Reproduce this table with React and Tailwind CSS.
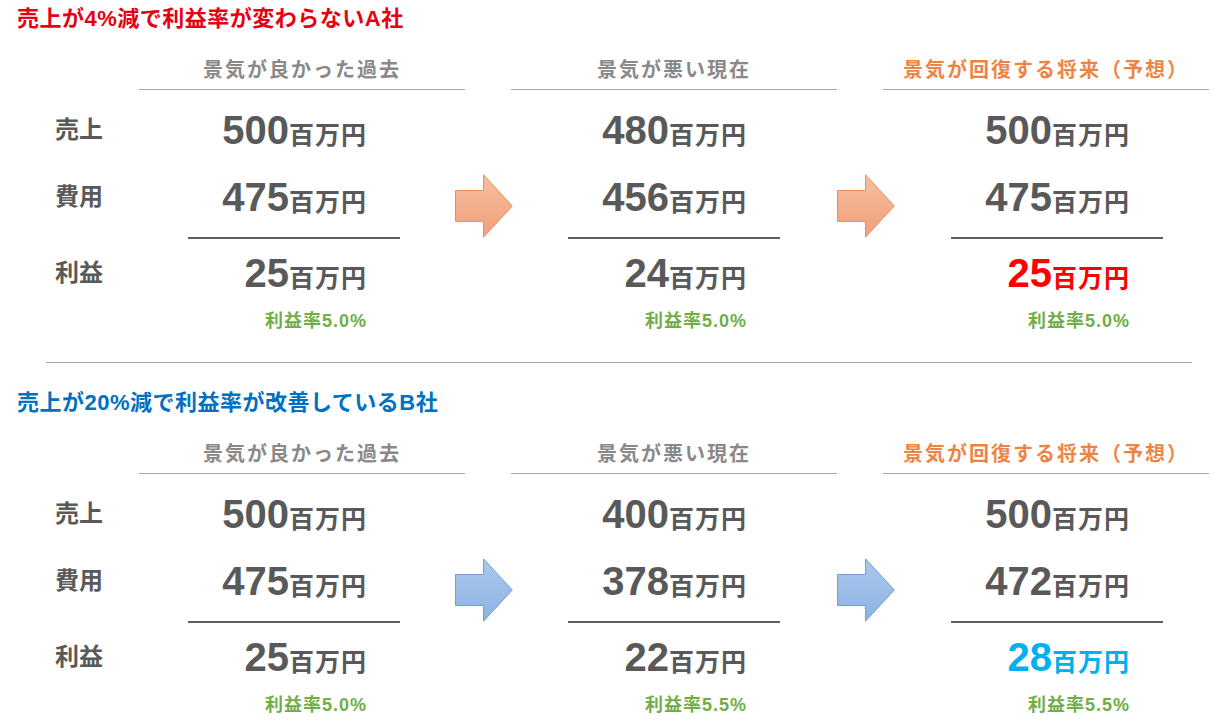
import React from 'react';

const headers = [
  { text: '景気が良かった過去', color: 'text-[#898989]' },
  { text: '景気が悪い現在', color: 'text-[#898989]' },
  { text: '景気が回復する将来（予想）', color: 'text-[#ee8444]' },
];

const companies = [
  {
    title: '売上が4%減で利益率が変わらないA社',
    titleColor: 'text-[#e60012]',
    arrow: 'orange',
    periods: [
      { sales: '500', cost: '475', profit: '25', margin: '5.0%' },
      { sales: '480', cost: '456', profit: '24', margin: '5.0%' },
      { sales: '500', cost: '475', profit: '25', margin: '5.0%', profitColor: 'text-[#ff0000]' },
    ],
  },
  {
    title: '売上が20%減で利益率が改善しているB社',
    titleColor: 'text-[#0070c0]',
    arrow: 'blue',
    periods: [
      { sales: '500', cost: '475', profit: '25', margin: '5.0%' },
      { sales: '400', cost: '378', profit: '22', margin: '5.5%' },
      { sales: '500', cost: '472', profit: '28', margin: '5.5%', profitColor: 'text-[#00b0f0]' },
    ],
  },
];

const Arrow = ({ tone }) => {
  const id = `grad-${tone}`;
  const stops = tone === 'orange' ? ['#f6bea0', '#f1a07a'] : ['#a9c8ec', '#8db2e2'];
  const stroke = tone === 'orange' ? '#ee8d5c' : '#739fd6';
  return (
    <svg width="58" height="64" viewBox="0 0 58 64">
      <defs>
        <linearGradient id={id} x1="0" y1="0" x2="0" y2="1">
          <stop offset="0" stopColor={stops[0]} />
          <stop offset="1" stopColor={stops[1]} />
        </linearGradient>
      </defs>
      <path
        d="M0.5 16.5 H28.5 V0.8 L57.3 32 L28.5 63.2 V47.5 H0.5 Z"
        fill={`url(#${id})`}
        stroke={stroke}
        strokeWidth="1"
      />
    </svg>
  );
};

const Amount = ({ value, color = 'text-[#595959]' }) => (
  <div className={`flex items-baseline justify-end pr-[33px] font-bold ${color}`}>
    <span className="text-[40px] leading-none">{value}</span>
    <span className="text-[25px] leading-none tracking-[1px]">百万円</span>
  </div>
);

const PeriodColumn = ({ period }) => (
  <div className="w-[212px] flex flex-col">
    <div className="h-[67px] flex flex-col justify-center">
      <Amount value={period.sales} />
    </div>
    <div className="h-[67px] flex flex-col justify-center">
      <Amount value={period.cost} />
    </div>
    <div className="h-[14px] pt-[7px]">
      <div className="h-[2px] bg-[#5f5f5f]" />
    </div>
    <div className="h-[58px] flex flex-col justify-center">
      <Amount value={period.profit} color={period.profitColor} />
    </div>
    <div className="h-[30px] mt-[4px] flex items-center justify-end pr-[33px] text-[18px] font-bold tracking-[1px] text-[#70ad47]">
      利益率{period.margin}
    </div>
  </div>
);

const ArrowZone = ({ tone, width }) => (
  <div className={`${width} flex justify-center pt-[78px]`}>
    <div className="h-[64px]">
      <Arrow tone={tone} />
    </div>
  </div>
);

const Company = ({ company }) => (
  <section className="h-[384px] flex flex-col">
    <h2 className={`pl-[17px] pt-[4px] h-[34px] text-[22px] leading-[30px] font-bold tracking-[0.5px] ${company.titleColor}`}>
      {company.title}
    </h2>
    <div className="flex gap-[46px] pl-[139px] pt-[22px]">
      {headers.map((h) => (
        <div
          key={h.text}
          className={`w-[326px] text-center text-[20px] leading-[28px] pb-[5px] font-bold tracking-[2px] border-b border-[#a6a6a6] ${h.color}`}
        >
          {h.text}
        </div>
      ))}
    </div>

    <div className="flex pt-[6px]">
      <div className="w-[188px] pl-[55px] flex flex-col text-[24px] font-bold text-[#595959]">
        <div className="h-[67px] flex items-center">売上</div>
        <div className="h-[67px] flex items-center">費用</div>
        <div className="h-[14px]" />
        <div className="h-[58px] flex items-center">利益</div>
      </div>
      <PeriodColumn period={company.periods[0]} />
      <ArrowZone tone={company.arrow} width="w-[168px]" />
      <PeriodColumn period={company.periods[1]} />
      <ArrowZone tone={company.arrow} width="w-[171px]" />
      <PeriodColumn period={company.periods[2]} />
    </div>
  </section>
);

export default function App() {
  return (
    <div className="w-[1225px] h-[727px] overflow-hidden bg-white font-['Liberation_Sans','Noto_Sans_CJK_JP',sans-serif]">
      <div className="relative">
        <Company company={companies[0]} />
        <div className="absolute left-[46px] top-[362px] w-[1146px] h-px bg-[#a6a6a6]" />
      </div>
      <Company company={companies[1]} />
    </div>
  );
}
